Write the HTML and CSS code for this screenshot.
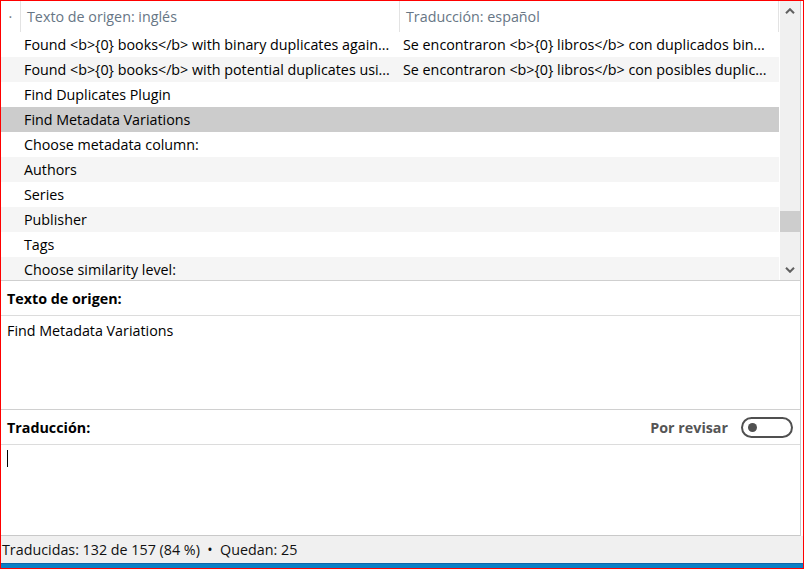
FILE: index.html
```html
<!DOCTYPE html>
<html lang="es">
<head>
<meta charset="utf-8">
<title>Traducción</title>
<link rel="stylesheet" href="styles.css">
</head>
<body>
<div class="window">
  <div class="panel">
    <div class="table">
      <div class="grid">
        <div class="header">
          <div class="hcell idx">·</div>
          <div class="hcell src">Texto de origen: inglés</div>
          <div class="hcell trg">Traducción: español</div>
        </div>
        <div class="rows">
          <div class="row"><span class="cell src">Found &lt;b&gt;{0} books&lt;/b&gt; with binary duplicates again...</span><span class="cell trg">Se encontraron &lt;b&gt;{0} libros&lt;/b&gt; con duplicados bin...</span></div>
          <div class="row alt"><span class="cell src">Found &lt;b&gt;{0} books&lt;/b&gt; with potential duplicates usi...</span><span class="cell trg">Se encontraron &lt;b&gt;{0} libros&lt;/b&gt; con posibles duplic...</span></div>
          <div class="row"><span class="cell src">Find Duplicates Plugin</span><span class="cell trg"></span></div>
          <div class="row selected"><span class="cell src">Find Metadata Variations</span><span class="cell trg"></span></div>
          <div class="row"><span class="cell src">Choose metadata column:</span><span class="cell trg"></span></div>
          <div class="row alt"><span class="cell src">Authors</span><span class="cell trg"></span></div>
          <div class="row"><span class="cell src">Series</span><span class="cell trg"></span></div>
          <div class="row alt"><span class="cell src">Publisher</span><span class="cell trg"></span></div>
          <div class="row"><span class="cell src">Tags</span><span class="cell trg"></span></div>
          <div class="row alt"><span class="cell src">Choose similarity level:</span><span class="cell trg"></span></div>
        </div>
      </div>
      <div class="scrollbar">
        <div class="arrow"><svg width="10" height="6" viewBox="0 0 10 6"><path d="M1 5.2 L5 1.2 L9 5.2" fill="none" stroke="#606060" stroke-width="2"/></svg></div>
        <div class="track"><div class="thumb"></div></div>
        <div class="arrow"><svg width="10" height="6" viewBox="0 0 10 6"><path d="M1 0.8 L5 4.8 L9 0.8" fill="none" stroke="#606060" stroke-width="2"/></svg></div>
      </div>
    </div>
    <div class="section-head">Texto de origen:</div>
    <div class="source">Find Metadata Variations</div>
    <div class="section-head trans">
      <span>Traducción:</span>
      <span class="review">Por revisar <span class="toggle"><span class="knob"></span></span></span>
    </div>
    <div class="editor"><span class="caret"></span></div>
  </div>
  <div class="status">Traducidas: 132 de 157 (84 %) &nbsp;•&nbsp; Quedan: 25</div>
  <div class="taskbar"></div>
</div>
</body>
</html>
```
FILE: styles.css
```css
* { box-sizing: border-box; }
html, body { margin: 0; padding: 0; background: #fff; }
body {
  font-family: "Open Sans", "Noto Sans", "Liberation Sans", sans-serif;
  font-size: 14.3px;
  color: #000;
}
.window {
  width: 804px;
  height: 569px;
  border: 1px solid #ff0000;
  display: flex;
  flex-direction: column;
  background: #fff;
}
.panel {
  width: 800px;
  height: 535px;
  border-right: 1px solid #c9c9c9;
  border-bottom: 1px solid #c9c9c9;
  display: flex;
  flex-direction: column;
  flex: none;
}
.table {
  height: 280px;
  border-bottom: 1px solid #cfcfcf;
  display: flex;
  flex: none;
}
.grid {
  width: 779px;
  display: flex;
  flex-direction: column;
}
.header {
  height: 31px;
  display: flex;
  flex: none;
}
.hcell {
  height: 31px;
  line-height: 31px;
  border-right: 1px solid #e3e3e3;
  color: #677685;
  white-space: nowrap;
  overflow: hidden;
}
.hcell.idx { width: 20px; text-align: center; color: #777; }
.hcell.src { width: 379px; padding-left: 6px; }
.hcell.trg { width: 379px; padding-left: 6px; }
.rows {
  flex: 1;
  overflow: hidden;
}
.row {
  height: 25px;
  width: 778px;
  display: flex;
  line-height: 25px;
}
.row.alt { background: #f5f5f5; }
.row.selected { background: #cccccc; }
.cell {
  white-space: nowrap;
  overflow: hidden;
  text-overflow: ellipsis;
}
.cell.src { width: 399px; padding-left: 23px; padding-right: 4px; }
.cell.trg { width: 379px; padding-left: 3px; padding-right: 7px; }
.scrollbar {
  width: 20px;
  background: #f0f0f0;
  display: flex;
  flex-direction: column;
}
.arrow {
  height: 20px;
  display: flex;
  align-items: center;
  justify-content: center;
}
.track {
  flex: 1;
  padding-top: 190px;
}
.thumb {
  height: 21px;
  background: #cdcdcd;
}
.section-head {
  height: 35px;
  border-bottom: 1px solid #dcdcdc;
  font-weight: 700;
  padding-left: 6px;
  display: flex;
  align-items: center;
  flex: none;
}
.section-head.trans {
  justify-content: space-between;
  padding-right: 7px;
  padding-top: 1px;
}
.source {
  height: 94px;
  border-bottom: 1px solid #d0d0d0;
  padding: 5px 6px 0;
  line-height: 20px;
  flex: none;
}
.review {
  display: flex;
  align-items: center;
  gap: 13px;
  color: #555;
}
.toggle {
  width: 52px;
  height: 21px;
  border: 2px solid #505050;
  border-radius: 11px;
  display: flex;
  align-items: center;
  padding-left: 5px;
}
.knob {
  width: 9px;
  height: 9px;
  border-radius: 50%;
  background: #505050;
}
.editor {
  flex: 1;
  padding: 5px 6px 0;
}
.caret {
  display: block;
  width: 1px;
  height: 17px;
  background: #000;
}
.status {
  height: 27px;
  background: #f0f0f0;
  line-height: 27px;
  padding-left: 1px;
  color: #111;
  flex: none;
  white-space: nowrap;
}
.taskbar {
  height: 5px;
  background: #0a80c6;
  border-top: 1px solid #1267a8;
  flex: none;
}
```
